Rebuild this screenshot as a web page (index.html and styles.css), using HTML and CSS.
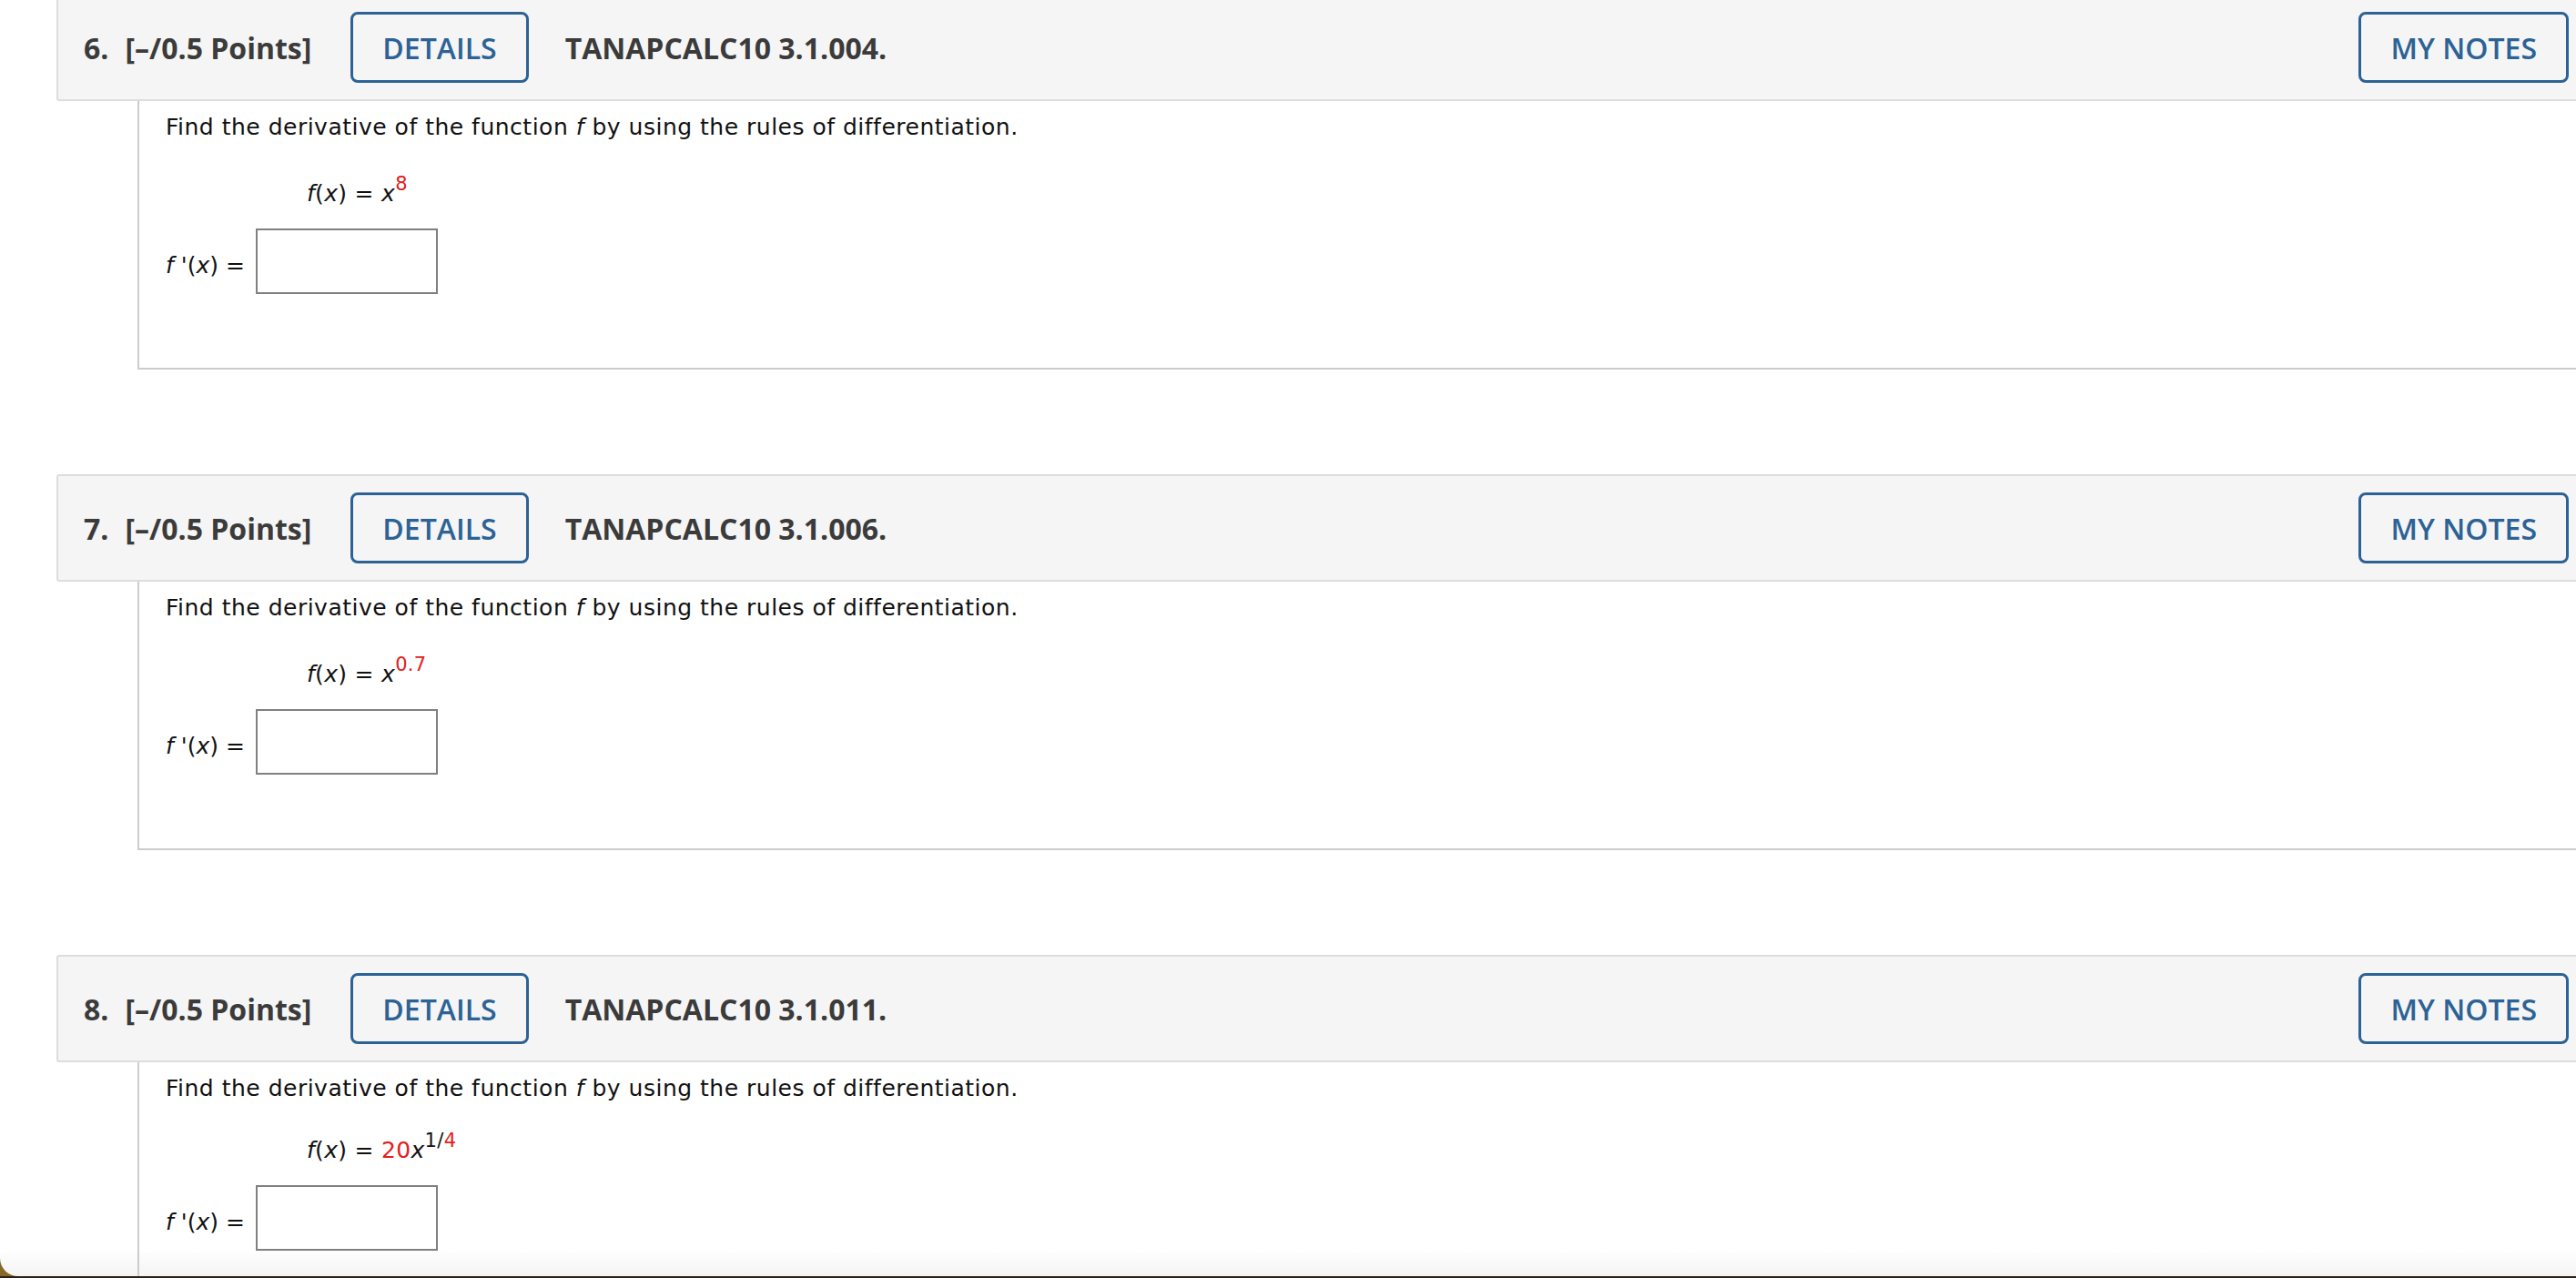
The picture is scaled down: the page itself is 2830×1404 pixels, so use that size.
FILE: index.html
```html
<!DOCTYPE html>
<html lang="en">
<head>
<meta charset="utf-8">
<title>Questions</title>
<link rel="stylesheet" href="styles.css">
</head>
<body>
<div class="window">
  <div class="questions">
    <section class="question">
      <div class="qhead">
        <span class="qnum">6.</span>
        <span class="qpts">[–/0.5 Points]</span>
        <button class="btn">DETAILS</button>
        <span class="qcode">TANAPCALC10 3.1.004.</span>
        <button class="btn btn-notes">MY NOTES</button>
      </div>
      <div class="qbody">
        <p class="prompt">Find the derivative of the function <i>f</i> by using the rules of differentiation.</p>
        <div class="eq"><i>f</i>(<i>x</i>) = <i>x</i><sup class="red">8</sup></div>
        <div class="answer"><span class="lbl"><i>f</i> '(<i>x</i>) =</span><input class="ans" type="text"></div>
      </div>
    </section>
    <section class="question">
      <div class="qhead">
        <span class="qnum">7.</span>
        <span class="qpts">[–/0.5 Points]</span>
        <button class="btn">DETAILS</button>
        <span class="qcode">TANAPCALC10 3.1.006.</span>
        <button class="btn btn-notes">MY NOTES</button>
      </div>
      <div class="qbody">
        <p class="prompt">Find the derivative of the function <i>f</i> by using the rules of differentiation.</p>
        <div class="eq"><i>f</i>(<i>x</i>) = <i>x</i><sup class="red">0.7</sup></div>
        <div class="answer"><span class="lbl"><i>f</i> '(<i>x</i>) =</span><input class="ans" type="text"></div>
      </div>
    </section>
    <section class="question">
      <div class="qhead">
        <span class="qnum">8.</span>
        <span class="qpts">[–/0.5 Points]</span>
        <button class="btn">DETAILS</button>
        <span class="qcode">TANAPCALC10 3.1.011.</span>
        <button class="btn btn-notes">MY NOTES</button>
      </div>
      <div class="qbody">
        <p class="prompt">Find the derivative of the function <i>f</i> by using the rules of differentiation.</p>
        <div class="eq eq-tall"><i>f</i>(<i>x</i>) = <span class="red">20</span><i>x</i><sup>1/<span class="red">4</span></sup></div>
        <div class="answer"><span class="lbl"><i>f</i> '(<i>x</i>) =</span><input class="ans" type="text"></div>
      </div>
    </section>
  </div>
</div>
</body>
</html>
```

FILE: styles.css
```css
html, body {
  margin: 0;
  padding: 0;
  overflow: hidden;
}

body {
  height: 1404px;
  background: linear-gradient(to top, #2a2219 2px, #86692a 2px);
}

.window {
  height: 1402px;
  overflow: hidden;
  background: linear-gradient(to bottom, #ffffff calc(100% - 30px), #f4f4f4);
  border-bottom-left-radius: 20px;
}

.questions {
  margin-top: -7px;
  margin-left: 62px;
  margin-right: -10px;
}

.question {
  margin-bottom: 115px;
}

.qhead {
  display: flex;
  align-items: center;
  box-sizing: border-box;
  height: 118px;
  padding: 0 16px 0 28px;
  background: #f5f5f5;
  border: 2px solid #dddddd;
  border-radius: 3px;
  font-family: "Open Sans", "Liberation Sans", sans-serif;
  font-weight: 700;
  font-size: 32px;
  color: #3b3b3b;
}

.qnum {
  margin-right: 18px;
}

.btn {
  box-sizing: border-box;
  height: 78px;
  padding: 0 32px;
  margin-left: 43px;
  background: transparent;
  border: 3px solid #2c6295;
  border-radius: 8px;
  font-family: "Open Sans", "Liberation Sans", sans-serif;
  font-weight: 600;
  font-size: 32px;
  color: #2c6295;
}

.qcode {
  margin-left: 40px;
}

.btn-notes {
  margin-left: auto;
}

.qbody {
  margin-left: 89px;
  padding: 14px 0 81px 29px;
  border-left: 2px solid #cccccc;
  border-bottom: 2px solid #cccccc;
  font-family: "DejaVu Sans", Verdana, sans-serif;
  font-size: 25px;
  color: #111111;
}

.prompt {
  margin: 0;
  line-height: 30px;
  letter-spacing: 0.5px;
}

.eq {
  height: 30px;
  line-height: 30px;
  margin: 43px 0 0 155px;
  letter-spacing: 0.3px;
}

.eq-tall {
  margin-top: 38px;
}

.eq sup {
  font-size: 21px;
  line-height: 0;
  vertical-align: 12px;
}

.red {
  color: #e3201c;
}

.answer {
  display: flex;
  align-items: center;
  margin-top: 23px;
}

.lbl {
  line-height: 30px;
  padding-top: 9px;
}

.ans {
  box-sizing: border-box;
  width: 200px;
  height: 72px;
  margin: 0 0 0 12px;
  border: 2px solid #808080;
  background: #ffffff;
}
```
